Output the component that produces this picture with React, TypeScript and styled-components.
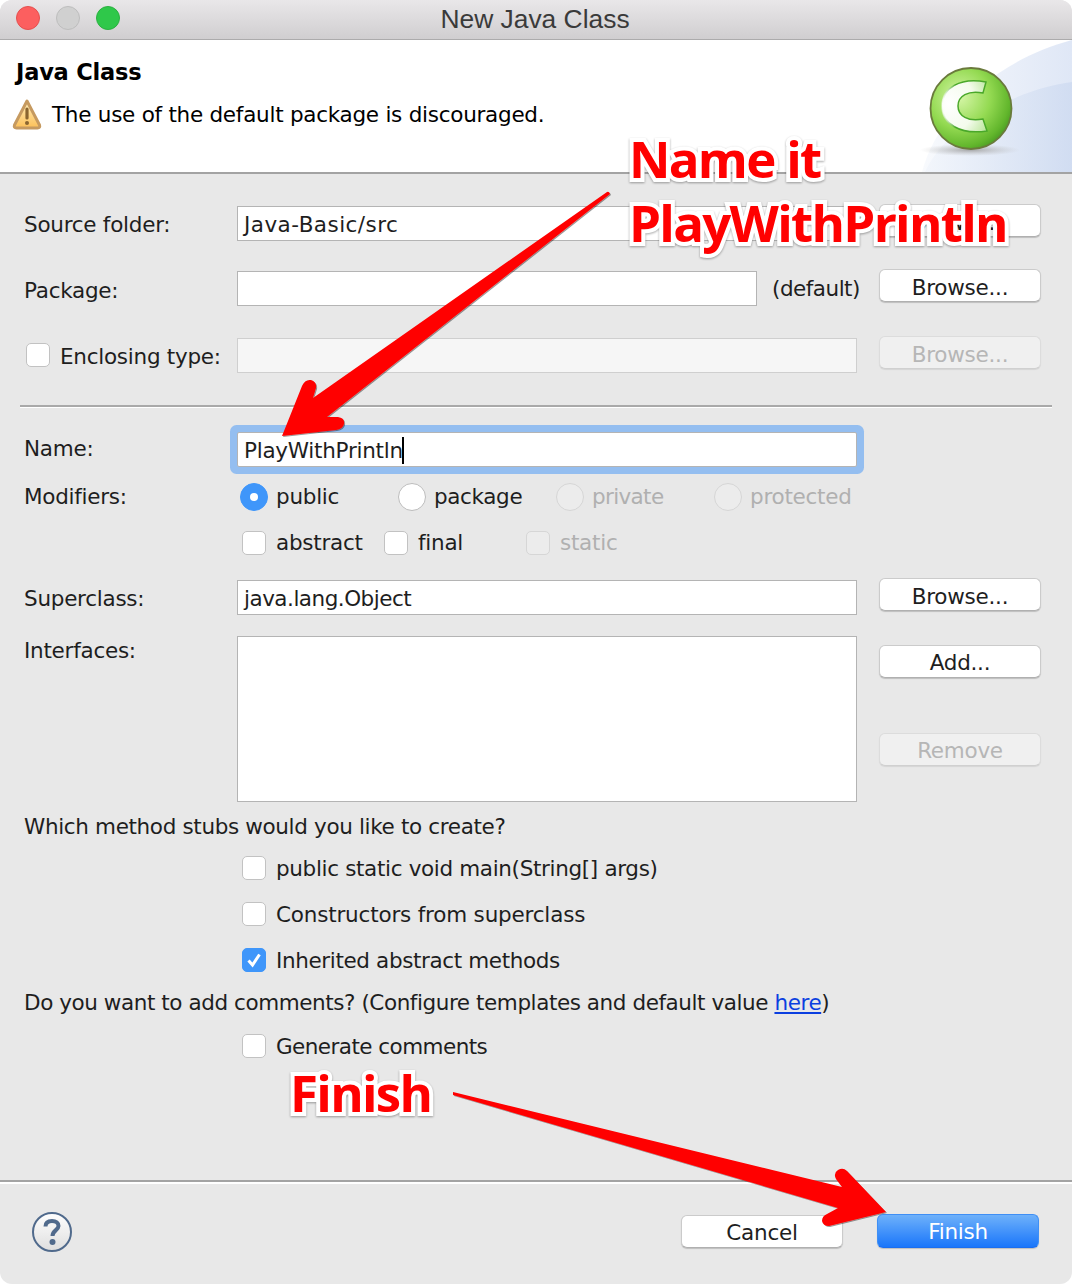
import React from "react";
import styled, { createGlobalStyle } from "styled-components";

const Global = createGlobalStyle`
  html, body { margin: 0; padding: 0; background: #fff; }
  * { box-sizing: border-box; }
`;

const Page = styled.div`
  width: 1074px;
  height: 1284px;
  position: relative;
  overflow: hidden;
  font-family: "DejaVu Sans", sans-serif;
  font-size: 21.5px;
  letter-spacing: -0.26px;
  color: #1e1e1e;
`;

const Win = styled.div`
  width: 1072px;
  height: 1284px;
  display: flex;
  flex-direction: column;
  background: #e8e8e8;
  border-radius: 12px;
  overflow: hidden;
`;

const TitleBar = styled.div`
  height: 40px;
  flex: none;
  display: flex;
  align-items: center;
  padding: 0 16px;
  gap: 16px;
  position: relative;
  background: linear-gradient(#e9e7e9, #d0ced0);
  border-bottom: 1px solid #acabac;
`;

const Light = styled.span<{ $c: string; $b: string }>`
  width: 24px;
  height: 24px;
  border-radius: 50%;
  background: ${(p) => p.$c};
  border: 1px solid ${(p) => p.$b};
  margin-top: -3px;
`;

const WinTitle = styled.div`
  position: absolute;
  left: 0;
  right: 0;
  top: 4px;
  text-align: center;
  font-family: "Liberation Sans", sans-serif;
  font-size: 26.4px;
  letter-spacing: 0;
  line-height: 30px;
  color: #3a3a3a;
  padding-right: 2px;
`;

const Header = styled.div`
  height: 134px;
  flex: none;
  position: relative;
  background: #fff;
  border-bottom: 2px solid #a3a3a3;
  padding: 16px 0 0 16px;
`;

const HeaderTitle = styled.div`
  font-weight: 700;
  font-size: 22.5px;
  line-height: 32px;
  letter-spacing: -0.2px;
  color: #000;
`;

const Message = styled.div`
  display: flex;
  align-items: center;
  gap: 10px;
  margin: 10px 0 0 -4px;
  color: #000;
  height: 32px;
`;

const Art = styled.svg`
  position: absolute;
  right: 0;
  top: 0;
`;

const Row = styled.div<{ $top: number; $h?: number }>`
  display: grid;
  grid-template-columns: 213px 620px 22px 162px;
  padding-left: 24px;
  margin-top: ${(p) => p.$top}px;
  height: ${(p) => p.$h ?? 36}px;
  align-items: center;
  flex: none;
`;

const Label = styled.div<{ $pad?: number }>`
  line-height: 30px;
  padding-top: ${(p) => p.$pad ?? 0}px;
  white-space: nowrap;
`;

const CheckLabel = styled.label`
  display: flex;
  align-items: center;
  gap: 10px;
  margin-left: 2px;
  white-space: nowrap;
`;

const CheckText = styled.span`
  padding-top: 2px;
`;

const Field = styled.div<{ $focus?: boolean; $off?: boolean; $short?: boolean; $ls?: number }>`
  height: 35px;
  align-self: end;
  width: ${(p) => (p.$short ? "520px" : "100%")};
  flex: none;
  background: ${(p) => (p.$off ? "#f6f6f6" : "#fff")};
  border: 1px solid ${(p) => (p.$off ? "#cfcfcf" : "#b4b4b4")};
  padding: 0 6px;
  line-height: 35px;
  letter-spacing: ${(p) => p.$ls ?? -0.26}px;
  white-space: nowrap;
  box-shadow: ${(p) => (p.$focus ? "0 0 0 7px #94bef0" : "none")};
  border-radius: ${(p) => (p.$focus ? "2px" : "0")};
`;

const PackageCell = styled.div`
  display: flex;
  align-items: flex-end;
  gap: 15px;
  white-space: nowrap;
`;

const DefaultNote = styled.span`
  letter-spacing: -0.5px;
  line-height: 34px;
`;

const Caret = styled.span`
  display: inline-block;
  width: 2px;
  height: 27px;
  margin-left: -1px;
  background: #000;
  vertical-align: -6px;
`;

const Button = styled.button<{ $off?: boolean }>`
  width: 162px;
  height: 33px;
  padding: 1px 0 0;
  font: inherit;
  letter-spacing: inherit;
  color: ${(p) => (p.$off ? "#b6b6b6" : "#1e1e1e")};
  background: ${(p) => (p.$off ? "#f0f0f0" : "#fff")};
  border: 1px solid ${(p) => (p.$off ? "#dcdcdc" : "#cbcbcb")};
  border-bottom-color: ${(p) => (p.$off ? "#d0d0d0" : "#b0b0b0")};
  border-radius: 6px;
  box-shadow: 0 1px 1px rgba(0, 0, 0, ${(p) => (p.$off ? 0.08 : 0.18)});
`;

const RowButton = styled(Button)`
  align-self: start;
  margin-top: -1px;
  padding-top: 4px;
`;

const PrimaryButton = styled(Button)`
  color: #fff;
  height: 34px;
  margin-top: -1px;
  background: linear-gradient(#6eb1fa, #1a76fa);
  border-color: #3f8ff5;
  border-bottom-color: #1a6ef0;
  margin-left: 34px;
`;

const Separator = styled.div<{ $top: number }>`
  margin: ${(p) => p.$top}px 20px 0;
  height: 3px;
  flex: none;
  border-top: 2px solid #a9a9a9;
  border-bottom: 1px solid #fff;
`;

const OptionGrid = styled.div<{ $col: number; $left: number }>`
  display: grid;
  grid-template-columns: repeat(auto-fill, ${(p) => p.$col}px);
  grid-auto-flow: column;
  padding-left: ${(p) => p.$left}px;
  grid-column: 2 / 5;
  white-space: nowrap;
`;

const Option = styled.label<{ $off?: boolean; $gap: number }>`
  display: flex;
  align-items: center;
  gap: ${(p) => p.$gap}px;
  color: ${(p) => (p.$off ? "#b0b0b0" : "inherit")};
`;

const RadioText = styled.span<{ $ls?: number }>`
  padding-bottom: 2px;
  letter-spacing: ${(p) => p.$ls ?? -0.26}px;
`;

const Radio = styled.span<{ $on?: boolean; $off?: boolean }>`
  width: 28px;
  height: 28px;
  flex: none;
  border-radius: 50%;
  display: flex;
  align-items: center;
  justify-content: center;
  background: ${(p) => (p.$on ? "#3f96fa" : p.$off ? "#ececec" : "#fff")};
  border: 1px solid ${(p) => (p.$on ? "#3f96fa" : p.$off ? "#d6d6d6" : "#bdbdbd")};
  &::after {
    content: "";
    display: ${(p) => (p.$on ? "block" : "none")};
    width: 8px;
    height: 8px;
    border-radius: 50%;
    background: #fff;
  }
`;

const Box = styled.span<{ $on?: boolean; $off?: boolean }>`
  width: 24px;
  height: 24px;
  flex: none;
  border-radius: 5px;
  display: flex;
  align-items: center;
  justify-content: center;
  background: ${(p) => (p.$on ? "#3f96fa" : p.$off ? "#ececec" : "#fff")};
  border: 1px solid ${(p) => (p.$on ? "#3f96fa" : p.$off ? "#d6d6d6" : "#c2c2c2")};
`;

const InterfacesRow = styled(Row)`
  align-items: start;
`;

const ListBox = styled.div`
  height: 166px;
  background: #fff;
  border: 1px solid #b4b4b4;
`;

const ButtonStack = styled.div`
  grid-column: 4;
  display: flex;
  flex-direction: column;
  gap: 55px;
  padding-top: 9px;
`;

const Line = styled.div<{ $top: number; $ls: number }>`
  margin: ${(p) => p.$top}px 0 0 24px;
  height: 30px;
  line-height: 32px;
  letter-spacing: ${(p) => p.$ls}px;
  white-space: nowrap;
  flex: none;
`;

const StubRow = styled.label<{ $top: number; $ls: number }>`
  display: flex;
  align-items: center;
  gap: 10px;
  height: 24px;
  flex: none;
  margin: ${(p) => p.$top}px 0 0 242px;
  letter-spacing: ${(p) => p.$ls}px;
  white-space: nowrap;
`;

const Link = styled.a`
  color: #0b3fe0;
  text-decoration: underline;
`;

const Footer = styled.div`
  margin-top: auto;
  height: 104px;
  flex: none;
  border-top: 2px solid #a3a3a3;
  display: flex;
  align-items: flex-start;
  position: relative;
  padding: 30px 33px 0 32px;
  &::before {
    content: "";
    position: absolute;
    left: 0;
    right: 0;
    top: 0;
    height: 2px;
    background: #fff;
  }
`;

const Help = styled.svg`
  flex: none;
`;

const FooterActions = styled.div`
  margin-left: auto;
  display: flex;
  align-items: flex-start;
  padding-top: 3px;
`;

const Callout = styled.div<{ $x: number; $y: number }>`
  position: absolute;
  left: ${(p) => p.$x}px;
  top: ${(p) => p.$y}px;
  font-family: "Open Sans", "Noto Sans", sans-serif;
  font-weight: 700;
  font-size: 51px;
  line-height: 64px;
  letter-spacing: -1.7px;
  color: #ff0000;
  white-space: nowrap;
  -webkit-text-stroke: 8px #fff;
  paint-order: stroke fill;
  filter: drop-shadow(0 1px 1px rgba(0, 0, 0, 0.35));
`;

const Arrows = styled.svg`
  position: absolute;
  left: 0;
  top: 0;
  pointer-events: none;
`;

function Check() {
  return (
    <svg width="18" height="18" viewBox="0 0 18 18">
      <path d="M3.5 9.5 L7.5 14 L14.5 3.5" fill="none" stroke="#fff" strokeWidth="3" />
    </svg>
  );
}

function WarningIcon() {
  return (
    <svg width="30" height="32" viewBox="0 0 30 32">
      <defs>
        <linearGradient id="warn" x1="0" y1="0" x2="0" y2="1">
          <stop offset="0" stopColor="#ffeebc" />
          <stop offset="1" stopColor="#fcc058" />
        </linearGradient>
      </defs>
      <path
        d="M15 3 L27.5 27 Q28.5 30 25.5 30 H4.5 Q1.5 30 2.5 27 Z"
        fill="url(#warn)"
        stroke="#c69a60"
        strokeWidth="3"
        strokeLinejoin="round"
      />
      <path d="M15 11 V20" stroke="#8a6530" strokeWidth="3.2" strokeLinecap="round" />
      <circle cx="15" cy="25" r="2" fill="#8a6530" />
    </svg>
  );
}

function HeaderArt() {
  return (
    <Art width="152" height="132" viewBox="920 40 152 132">
      <defs>
        <linearGradient id="sw" x1="0" y1="0" x2="1" y2="0">
          <stop offset="0" stopColor="#f8fafd" />
          <stop offset="1" stopColor="#dfe7f6" />
        </linearGradient>
        <linearGradient id="sw2" x1="0" y1="0" x2="1" y2="0">
          <stop offset="0" stopColor="#f1f5fb" />
          <stop offset="1" stopColor="#ccd9f0" />
        </linearGradient>
        <radialGradient id="ball" cx="0.36" cy="0.36" r="0.75">
          <stop offset="0" stopColor="#d6f6a8" />
          <stop offset="0.5" stopColor="#94da52" />
          <stop offset="0.82" stopColor="#62b62c" />
          <stop offset="1" stopColor="#3f8f1e" />
        </radialGradient>
        <radialGradient id="cee" cx="0.15" cy="0.45" r="0.95">
          <stop offset="0" stopColor="#ffffff" />
          <stop offset="0.6" stopColor="#f4fbec" />
          <stop offset="1" stopColor="#bfe8a2" />
        </radialGradient>
        <linearGradient id="ceeLine" x1="0" y1="0" x2="1" y2="0">
          <stop offset="0" stopColor="#ffffff" stopOpacity="0.5" />
          <stop offset="0.3" stopColor="#4aa82a" />
          <stop offset="1" stopColor="#4aa82a" />
        </linearGradient>
        <radialGradient id="shade" cx="0.5" cy="0.5" r="0.5">
          <stop offset="0" stopColor="#9a9a9a" stopOpacity="0.85" />
          <stop offset="1" stopColor="#bbbbbb" stopOpacity="0" />
        </radialGradient>
      </defs>
      <path d="M922 172 C935 120 990 62 1072 40 V172 Z" fill="url(#sw)" />
      <path d="M1000 105 C1025 92 1050 85 1072 82 V172 H925 C940 140 970 120 1000 105 Z" fill="url(#sw2)" opacity="0.75" />
      <ellipse cx="970" cy="150" rx="50" ry="6" fill="url(#shade)" />
      <circle cx="971" cy="108.5" r="40.5" fill="url(#ball)" stroke="#6a7a3c" strokeWidth="1.8" />
      <path
        d="M986 82 C960 77 942 88 942 106 C942 124 960 135 987 131 L983 119 C968 122 958 116 958 106 C958 96 968 90 983 93 Z"
        fill="url(#cee)"
        stroke="url(#ceeLine)"
        strokeWidth="1.5"
      />
    </Art>
  );
}

export default function App() {
  return (
    <Page>
      <Global />
      <Win>
        <TitleBar>
          <Light $c="#fc5f5f" $b="#e4504f" />
          <Light $c="#d0d0d0" $b="#bdbdbd" />
          <Light $c="#2fc84a" $b="#2bb040" />
          <WinTitle>New Java Class</WinTitle>
        </TitleBar>
        <Header>
          <HeaderArt />
          <HeaderTitle>Java Class</HeaderTitle>
          <Message>
            <WarningIcon />
            The use of the default package is discouraged.
          </Message>
        </Header>

        <Row $top={31}>
          <Label $pad={4}>Source folder:</Label>
          <Field $ls={0.45}>Java-Basic/src</Field>
          <span />
          <RowButton>Browse...</RowButton>
        </Row>
        <Row $top={29}>
          <Label $pad={6}>Package:</Label>
          <PackageCell>
            <Field $short />
            <DefaultNote>(default)</DefaultNote>
          </PackageCell>
          <span />
          <RowButton>Browse...</RowButton>
        </Row>
        <Row $top={31}>
          <CheckLabel>
            <Box />
            <CheckText>Enclosing type:</CheckText>
          </CheckLabel>
          <Field $off />
          <span />
          <RowButton $off>Browse...</RowButton>
        </Row>

        <Separator $top={32} />

        <Row $top={23}>
          <Label>Name:</Label>
          <Field $focus>
            PlayWithPrintln
            <Caret />
          </Field>
        </Row>
        <Row $top={15} $h={28}>
          <Label>Modifiers:</Label>
          <OptionGrid $col={158} $left={3}>
            <Option $gap={8}>
              <Radio $on />
              <RadioText>public</RadioText>
            </Option>
            <Option $gap={8}>
              <Radio />
              <RadioText $ls={-0.36}>package</RadioText>
            </Option>
            <Option $off $gap={8}>
              <Radio $off />
              <RadioText $ls={-0.65}>private</RadioText>
            </Option>
            <Option $off $gap={8}>
              <Radio $off />
              <RadioText>protected</RadioText>
            </Option>
          </OptionGrid>
        </Row>
        <Row $top={20} $h={24}>
          <span />
          <OptionGrid $col={142} $left={5}>
            <Option $gap={10}>
              <Box />
              abstract
            </Option>
            <Option $gap={10}>
              <Box />
              final
            </Option>
            <Option $off $gap={10}>
              <Box $off />
              static
            </Option>
          </OptionGrid>
        </Row>
        <Row $top={25}>
          <Label $pad={4}>Superclass:</Label>
          <Field $ls={-0.5}>java.lang.Object</Field>
          <span />
          <RowButton>Browse...</RowButton>
        </Row>
        <InterfacesRow $top={21} $h={166}>
          <Label>Interfaces:</Label>
          <ListBox />
          <ButtonStack>
            <Button>Add...</Button>
            <Button $off>Remove</Button>
          </ButtonStack>
        </InterfacesRow>

        <Line $top={9} $ls={-0.35}>Which method stubs would you like to create?</Line>
        <StubRow $top={15} $ls={-0.34}>
          <Box />
          public static void main(String[] args)
        </StubRow>
        <StubRow $top={22} $ls={-0.19}>
          <Box />
          Constructors from superclass
        </StubRow>
        <StubRow $top={22} $ls={-0.37}>
          <Box $on>
            <Check />
          </Box>
          Inherited abstract methods
        </StubRow>
        <Line $top={15} $ls={-0.43}>
          Do you want to add comments? (Configure templates and default value <Link href="#">here</Link>)
        </Line>
        <StubRow $top={17} $ls={-0.55}>
          <Box />
          Generate comments
        </StubRow>

        <Footer>
          <Help width="40" height="40" viewBox="0 0 40 40">
            <defs>
              <linearGradient id="hp" x1="0" y1="0" x2="0" y2="1">
                <stop offset="0" stopColor="#ffffff" />
                <stop offset="1" stopColor="#dedede" />
              </linearGradient>
            </defs>
            <circle cx="20" cy="20" r="19" fill="url(#hp)" stroke="#506a8c" strokeWidth="2" />
            <path
              d="M13.5 14.5 C13.5 10.5 16.5 9 20 9 C24 9 26.5 11 26.5 14 C26.5 18 20.5 18.5 20.5 24"
              fill="none"
              stroke="#506a8c"
              strokeWidth="4"
            />
            <circle cx="20.5" cy="30" r="3" fill="#506a8c" />
          </Help>
          <FooterActions>
            <Button>Cancel</Button>
            <PrimaryButton>Finish</PrimaryButton>
          </FooterActions>
        </Footer>
      </Win>

      <Arrows width="1074" height="1284" viewBox="0 0 1074 1284">
        <defs>
          <filter id="as" x="-5%" y="-5%" width="110%" height="110%">
            <feDropShadow dx="1" dy="1" stdDeviation="0.6" floodColor="#000" floodOpacity="0.4" />
          </filter>
        </defs>
        <path
          filter="url(#as)"
          fill="#ff0000"
          d="M607 192 Q609 191 610 194 L327 417 L338 417 Q345 418 344 424 Q343 429 336 430 L282 436 L302 386 Q305 379 311 380 Q317 382 316 388 L313 398 Z"
        />
        <path
          filter="url(#as)"
          fill="#ff0000"
          d="M453 1092 L842 1187 L836 1179 Q833 1173 838 1170 Q843 1167 847 1171 L886 1212 L829 1226 Q823 1226 822 1221 Q822 1216 827 1214 L838 1208 L453 1095 Z"
        />
      </Arrows>
      <Callout $x={629} $y={126}>Name it</Callout>
      <Callout $x={629} $y={190}>PlayWithPrintln</Callout>
      <Callout $x={290} $y={1060}>Finish</Callout>
    </Page>
  );
}
